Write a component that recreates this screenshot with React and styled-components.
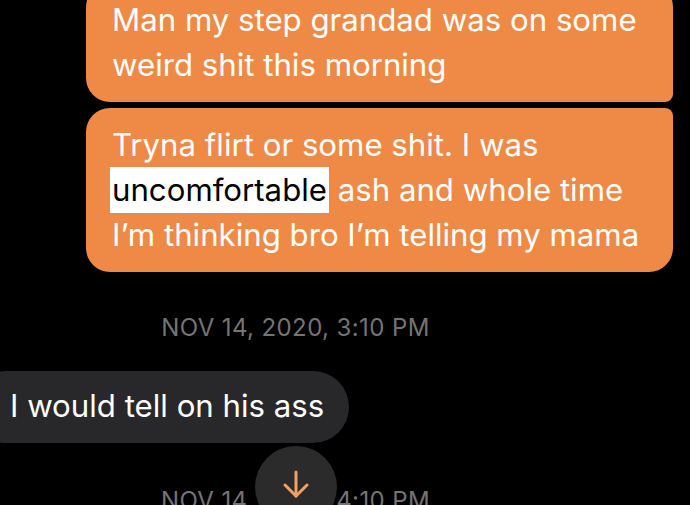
import styled, { createGlobalStyle } from "styled-components";

const GlobalStyle = createGlobalStyle`
  html, body {
    margin: 0;
    padding: 0;
    background: #000;
    overflow: hidden;
  }
  body {
    font-family: Inter, "Liberation Sans", sans-serif;
  }
`;

const Thread = styled.div`
  width: 690px;
  height: 505px;
  overflow: hidden;
  display: flex;
  flex-direction: column;
`;

const Scroller = styled.div`
  display: flex;
  flex-direction: column;
  margin-top: -17px;
`;

const OutRow = styled.div`
  display: flex;
  justify-content: flex-end;
  padding-right: 17px;
  margin-bottom: 6px;
`;

const OutBubble = styled.div`
  width: 587px;
  box-sizing: border-box;
  background: #ee8a45;
  color: #fff;
  font-size: 31.2px;
  line-height: 45px;
  padding: 15px 14px 14px 26px;
  border-radius: ${(p) => (p.$last ? "24px 8px 24px 24px" : "24px 24px 8px 24px")};
`;

const Highlight = styled.span`
  background: #fff;
  color: #000;
  padding: 4px 2px 4px;
  margin-left: -2px;
`;

const Stamp = styled.div`
  width: 591px;
  text-align: center;
  color: #747474;
  font-size: 24px;
  line-height: 29px;
  letter-spacing: 0.4px;
  margin-top: ${(p) => p.$gap || 0}px;
`;

const InRow = styled.div`
  display: flex;
  justify-content: flex-start;
  margin: 29px 0 0 -30px;
`;

const InBubble = styled.div`
  background: #28282a;
  color: #fff;
  font-size: 31.2px;
  line-height: 45px;
  padding: 13px 25px 14px 40px;
  border-radius: 36px;
`;

const Footer = styled.div`
  position: relative;
  margin-top: 43px;
`;

const ScrollButton = styled.button`
  position: absolute;
  left: 255px;
  top: -40px;
  width: 82px;
  height: 82px;
  border-radius: 50%;
  border: none;
  background: #2b2b2c;
  display: flex;
  align-items: flex-start;
  justify-content: center;
  padding-top: 23px;
  box-sizing: border-box;
`;

export default function App() {
  return (
    <>
      <GlobalStyle />
      <Thread>
        <Scroller>
          <OutRow>
            <OutBubble>
              Man my step grandad was on some
              <br />
              weird shit this morning
            </OutBubble>
          </OutRow>
          <OutRow>
            <OutBubble $last>
              Tryna flirt or some shit. I was
              <br />
              <Highlight>uncomfortable</Highlight> ash and whole time
              <br />
              I’m thinking bro I’m telling my mama
            </OutBubble>
          </OutRow>
          <Stamp $gap={35}>NOV 14, 2020, 3:10 PM</Stamp>
          <InRow>
            <InBubble>I would tell on his ass</InBubble>
          </InRow>
          <Footer>
            <Stamp>NOV 14, 2020, 4:10 PM</Stamp>
            <ScrollButton aria-label="Scroll to bottom">
              <svg width="30" height="30" viewBox="0 0 30 30" fill="none" stroke="#f2a062" strokeWidth="3" strokeLinecap="round" strokeLinejoin="round">
                <path d="M15 3 V27" />
                <path d="M4 16 L15 27 L26 16" />
              </svg>
            </ScrollButton>
          </Footer>
        </Scroller>
      </Thread>
    </>
  );
}
